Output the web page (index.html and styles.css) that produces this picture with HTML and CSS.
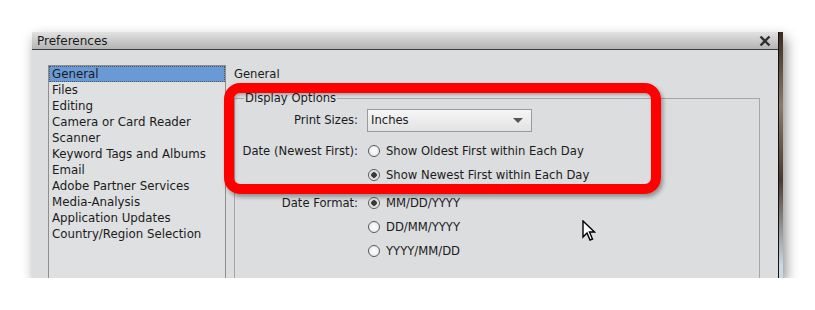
FILE: index.html
```html
<!DOCTYPE html>
<html lang="en">
  <head>
    <meta charset="UTF-8" />
    <title>Preferences</title>
    <link rel="stylesheet" href="styles.css">
  </head>
  <body>
    <div class="shot">
      <div class="dialog">
        <div class="titlebar">
          <span class="title">Preferences</span>
          <svg class="close" width="12" height="12" viewBox="0 0 12 12">
            <path d="M1.5 1.5 L10.5 10.5 M10.5 1.5 L1.5 10.5" stroke="#303030" stroke-width="2.4" />
          </svg>
        </div>
        <div class="content">
          <ul class="nav">
            <li class="selected">General</li>
            <li>Files</li>
            <li>Editing</li>
            <li>Camera or Card Reader</li>
            <li>Scanner</li>
            <li>Keyword Tags and Albums</li>
            <li>Email</li>
            <li>Adobe Partner Services</li>
            <li>Media-Analysis</li>
            <li>Application Updates</li>
            <li>Country/Region Selection</li>
          </ul>
          <section class="panel">
            <div class="panel-title">General</div>
            <div class="group">
              <div class="legend">Display Options</div>
              <div class="row first">
                <label class="label">Print Sizes:</label>
                <div class="select">
                  <span>Inches</span>
                  <span class="arrow"></span>
                </div>
              </div>
              <div class="row gap">
                <label class="label">Date (Newest First):</label>
                <span class="radio"></span>
                <span class="opt">Show Oldest First within Each Day</span>
              </div>
              <div class="row">
                <label class="label"></label>
                <span class="radio checked"></span>
                <span class="opt">Show Newest First within Each Day</span>
              </div>
              <div class="row small-gap">
                <label class="label">Date Format:</label>
                <span class="radio checked"></span>
                <span class="opt">MM/DD/YYYY</span>
              </div>
              <div class="row">
                <label class="label"></label>
                <span class="radio"></span>
                <span class="opt">DD/MM/YYYY</span>
              </div>
              <div class="row">
                <label class="label"></label>
                <span class="radio"></span>
                <span class="opt">YYYY/MM/DD</span>
              </div>
            </div>
          </section>
        </div>
      </div>
      <div class="strip"></div>
    </div>

    <!-- annotation drawn over the screenshot -->
    <div class="highlight"></div>

    <svg class="cursor" width="14" height="22" viewBox="0 0 14 22">
      <path d="M1 1 L1 17 L5 13 L8 20 L10.5 19 L7.5 12 L12.5 12 Z"
            fill="#fff" stroke="#000" stroke-width="1.4" stroke-linejoin="miter" />
    </svg>
  </body>
</html>
```

FILE: styles.css
```css
body {
  margin: 0;
  background-color: #ffffff;
  font-family: "DejaVu Sans", Verdana, sans-serif;
  font-size: 11.6px;
  color: #1b1b1b;
}
.shot {
  display: flex;
  width: 751px;
  height: 246px;
  margin: 32px 0 0 32px;
  box-shadow: 3px 6px 12px rgba(0, 0, 0, 0.45);
}
.dialog {
  display: flex;
  flex-direction: column;
  width: 746px;
  background-color: #dcdddf;
}
.titlebar {
  display: flex;
  align-items: center;
  justify-content: space-between;
  height: 17px;
  padding: 0 7px 0 5px;
  border-bottom: 1px solid #3c3c3c;
  background: linear-gradient(#e2e2e2, #b4b4b4);
  font-size: 12px;
}
.strip {
  width: 4px;
  border-left: 1px solid #111;
  background: linear-gradient(#3a2a1e, #8b7a68 30%, #4a3a2e 60%, #c9d9e6 95%);
}
.content {
  display: flex;
  flex: 1;
  padding: 15px 0 0 16px;
  overflow: hidden;
}
.nav {
  width: 176px;
  margin: 0;
  padding: 0;
  list-style: none;
  border: 1px solid #8e8e8e;
  border-bottom: none;
  background-color: #dfe0e2;
}
.nav li {
  height: 16px;
  line-height: 17px;
  padding-left: 3px;
  font-size: 11.8px;
}
.nav li.selected {
  height: 14px;
  line-height: 15px;
  border: 1px dotted #555;
  padding-left: 2px;
  background-color: #6a9ad6;
}
.panel {
  display: flex;
  flex-direction: column;
  flex: 1;
  margin: 0 18px 0 8px;
}
.panel-title {
  height: 16px;
  line-height: 16px;
  margin: 1px 0 16px;
}
.group {
  flex: 1;
  border: 1px solid #a6a6a6;
  border-bottom: none;
}
.legend {
  width: max-content;
  margin: -8px 0 0 9px;
  padding: 0 1px;
  line-height: 15px;
  background-color: #dcdddf;
}
.row {
  display: flex;
  align-items: center;
  height: 24px;
}
.row.first {
  margin-top: 2px;
}
.row.gap {
  margin-top: 7px;
}
.row.small-gap {
  margin-top: 4px;
}
.label {
  width: 123px;
  margin-right: 9px;
  text-align: right;
}
.select {
  display: flex;
  align-items: center;
  justify-content: space-between;
  box-sizing: border-box;
  width: 165px;
  height: 23px;
  padding: 0 8px 0 3px;
  border: 1px solid #9a9a9a;
  background: linear-gradient(#f6f6f6, #e2e2e3);
}
.arrow {
  width: 0;
  height: 0;
  border-left: 5px solid transparent;
  border-right: 5px solid transparent;
  border-top: 5px solid #555;
}
.radio {
  box-sizing: border-box;
  width: 12px;
  height: 12px;
  margin: 0 6px 0 1px;
  border: 1px solid #5a5a5a;
  border-radius: 50%;
  background: radial-gradient(#ffffff, #e4e4e4);
}
.radio.checked {
  background: radial-gradient(circle, #3a3a3a 0 2.5px, #cfcfcf 3px, #f4f4f4 5px);
}
.highlight {
  position: absolute;
  left: 224px;
  top: 83px;
  width: 417px;
  height: 91px;
  border: 10px solid #ff0000;
  border-radius: 16px;
  box-shadow: 2px 3px 4px rgba(0, 0, 0, 0.35), inset 1px 2px 3px rgba(0, 0, 0, 0.25);
}
.cursor {
  position: absolute;
  left: 582px;
  top: 220px;
}
```
